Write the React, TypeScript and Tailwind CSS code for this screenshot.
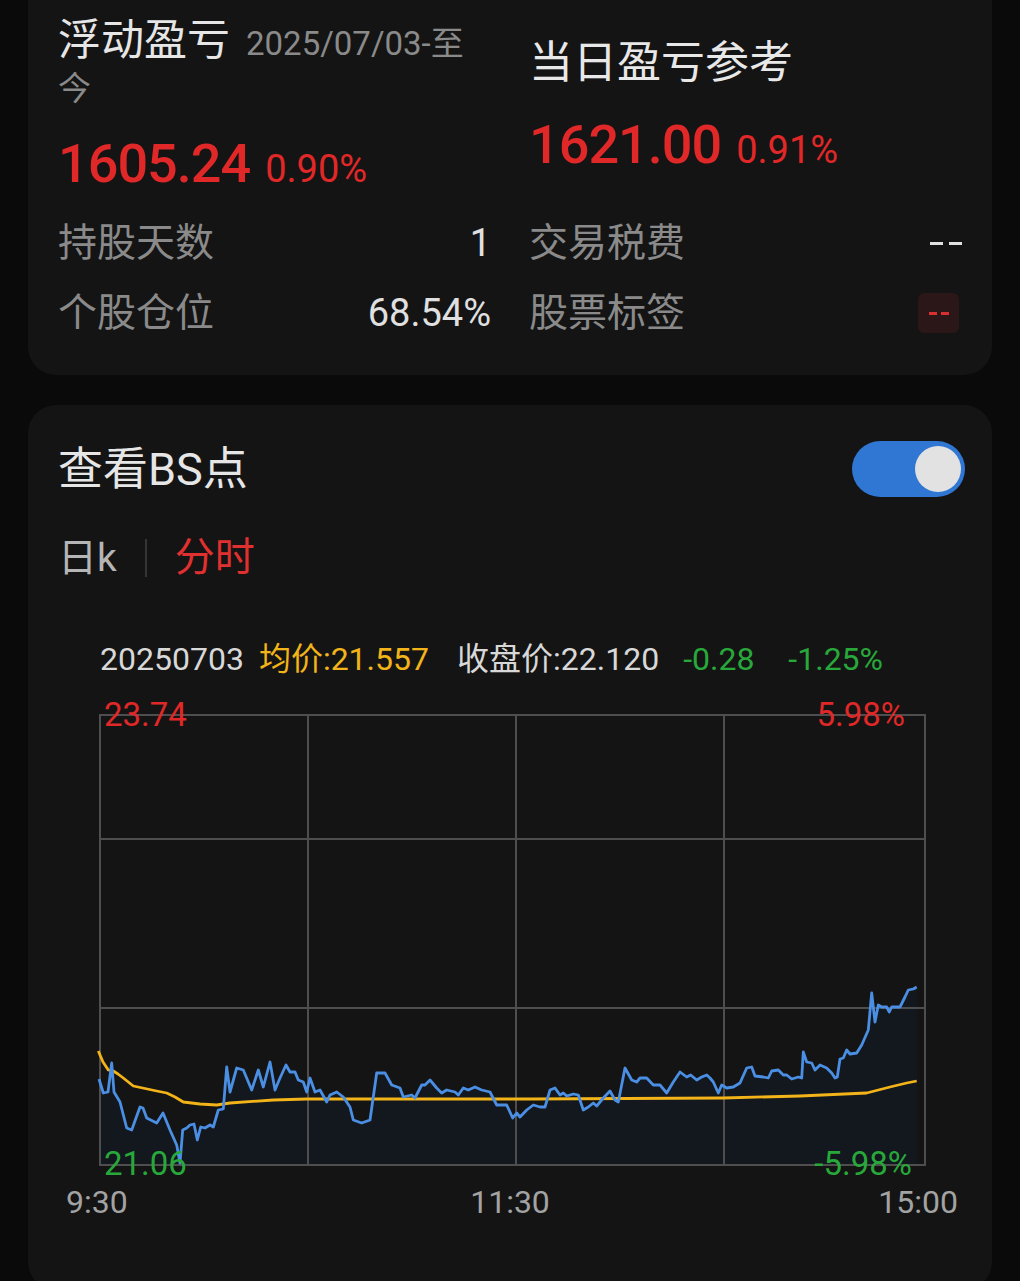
import React from "react";

const FONT = { fontFamily: '"Roboto", "Noto Sans CJK SC", sans-serif' };

const blue: [number, number][] = [
  [99, 1079], [103.3, 1093], [108, 1092], [111.7, 1063], [114, 1092], [120, 1102], [126.7, 1128], [131.7, 1130],
  [140, 1107], [143, 1108], [146.7, 1118], [156.7, 1123], [163, 1113], [170, 1130], [176.7, 1145], [180, 1163],
  [182.7, 1130], [186.7, 1128], [190, 1125], [194, 1124], [197.3, 1140], [200.7, 1127], [205, 1128], [210, 1125],
  [213.3, 1127], [218.3, 1110], [223.3, 1109], [226.7, 1067], [230, 1092], [236.7, 1068], [243.3, 1070],
  [251.7, 1090], [258.3, 1070], [263.3, 1087], [270, 1062], [275, 1090], [280, 1078], [286, 1065], [290, 1072],
  [295, 1072], [298.3, 1080], [303.3, 1082], [306.7, 1092], [310, 1078], [315, 1092], [320, 1090], [326.7, 1102],
  [330, 1095], [336.7, 1092], [343.3, 1097], [350, 1107], [353.3, 1120], [361.7, 1123], [370, 1120], [376.7, 1073],
  [385, 1073], [391.7, 1085], [400, 1088], [403.3, 1097], [411.7, 1095], [415, 1098], [421.7, 1085], [425, 1085],
  [430, 1080], [436.7, 1088], [441.7, 1093], [446.7, 1090], [455, 1092], [458.3, 1095], [463.3, 1088],
  [468.3, 1090], [475, 1087], [481.7, 1090], [490, 1092], [496.7, 1105], [506.7, 1105], [512.7, 1118],
  [516.7, 1113], [520, 1117], [526.7, 1110], [533.3, 1105], [540, 1107], [545, 1107], [550, 1090], [555, 1088],
  [560, 1095], [563.3, 1093], [566.7, 1096], [573.3, 1094], [578.3, 1095], [583.3, 1110], [588.3, 1107],
  [593.3, 1103], [596.7, 1106], [603.3, 1098], [610, 1091], [615, 1100], [618.3, 1102], [625, 1068],
  [631.7, 1080], [636.7, 1082], [640, 1078], [646.7, 1078], [653.3, 1085], [660, 1085], [666.7, 1093],
  [673.3, 1082], [680, 1072], [686.7, 1077], [690.7, 1075], [696.7, 1080], [701.7, 1077], [706.7, 1075],
  [710, 1078], [713.3, 1082], [718.3, 1093], [721.7, 1085], [726.7, 1088], [733.3, 1087], [740, 1083],
  [746.7, 1068], [751.7, 1067], [755, 1076], [763.3, 1077], [768.3, 1078], [771.7, 1071], [778.3, 1070],
  [783.3, 1075], [786.7, 1075], [791.7, 1079], [798.3, 1077], [801.7, 1078], [803.3, 1052], [806.7, 1062],
  [811.7, 1063], [815, 1070], [820, 1065], [826.7, 1068], [831.7, 1073], [835, 1078], [837.3, 1077], [840, 1059],
  [843.3, 1058], [846.7, 1050], [850, 1054], [856.7, 1053], [861.7, 1045], [868.3, 1030], [871.7, 993],
  [875, 1022], [878.3, 1005], [881.7, 1007], [886.7, 1007], [889.3, 1012], [891.7, 1007], [900, 1007],
  [905, 997], [908.3, 990], [913.3, 989], [916.7, 987],
];

const yellow: [number, number][] = [
  [98.3, 1051], [103, 1062], [108.3, 1070], [113.3, 1071], [118, 1074], [123.3, 1078], [133.3, 1086],
  [156.7, 1091], [166.7, 1093], [175, 1097], [183.3, 1102], [200, 1104], [216.7, 1105], [230, 1103],
  [273.3, 1100], [306.7, 1099], [420, 1099], [530, 1099], [723, 1098], [800, 1096], [866.7, 1093],
  [890, 1087], [906.7, 1083], [916.7, 1081],
];

const toPath = (pts: [number, number][]) =>
  pts.map((p, i) => `${i === 0 ? "M" : "L"}${p[0]} ${p[1]}`).join(" ");

function Row({ label, children }: { label: string; children: React.ReactNode }) {
  return (
    <div className="flex h-[70px] items-center justify-between">
      <span className="text-[39px] leading-none text-[#8a8a8a]">{label}</span>
      {children}
    </div>
  );
}

function Chart() {
  const area = `${toPath(blue)} L916.7 1165 L99 1165 Z`;
  return (
    <svg width="964" height="560" viewBox="28 690 964 560" className="block">
      <path d={area} fill="#13171e" />
      <g stroke="#4e4e4e" strokeWidth="2" fill="none">
        <rect x="100" y="715" width="825" height="450" />
        <line x1="308" y1="715" x2="308" y2="1165" />
        <line x1="516" y1="715" x2="516" y2="1165" />
        <line x1="724" y1="715" x2="724" y2="1165" />
        <line x1="100" y1="839" x2="925" y2="839" />
        <line x1="100" y1="1008" x2="925" y2="1008" />
      </g>
      <path d={toPath(yellow)} fill="none" stroke="#f2b418" strokeWidth="2.8" strokeLinejoin="round" />
      <path d={toPath(blue)} fill="none" stroke="#4a8fe3" strokeWidth="2.8" strokeLinejoin="round" />
      <g style={FONT} fontSize="33">
        <text x="104" y="726" fill="#e02828">23.74</text>
        <text x="905" y="726" fill="#e02828" textAnchor="end">5.98%</text>
        <text x="104" y="1175" fill="#28a83a">21.06</text>
        <text x="912" y="1175" fill="#28a83a" textAnchor="end">-5.98%</text>
      </g>
      <g style={FONT} fontSize="32" fill="#a3a3a3">
        <text x="66" y="1213">9:30</text>
        <text x="510" y="1213" textAnchor="middle">11:30</text>
        <text x="958" y="1213" textAnchor="end">15:00</text>
      </g>
    </svg>
  );
}

function Value({ main, pct }: { main: string; pct: string }) {
  return (
    <div className="flex h-[60px] items-baseline leading-[60px] text-[#e02828]">
      <span className="text-[54px] font-medium tracking-[-1px]">{main}</span>
      <span className="ml-[15px] text-[38px]">{pct}</span>
    </div>
  );
}

export default function App() {
  return (
    <div className="min-h-[1300px] bg-[#0a0a0a] pb-4" style={FONT}>
      {/* Card 1 */}
      <div className="mx-[28px] rounded-b-[28px] bg-[#141414] px-[30px] pb-[27px]">
        <div className="grid grid-cols-2 gap-x-[38px]">
          {/* top-left */}
          <div className="h-[208px] pt-[15px]">
            <div className="flex h-[50px] items-baseline leading-[50px]">
              <span className="text-[43px] text-[#e6e6e6]">浮动盈亏</span>
              <span className="ml-[16px] text-[33px] text-[#8a8a8a]">2025/07/03-至</span>
            </div>
            <div className="h-[48px] text-[33px] leading-[48px] text-[#8a8a8a]">今</div>
            <div className="mt-[21px]">
              <Value main="1605.24" pct="0.90%" />
            </div>
          </div>
          {/* top-right */}
          <div className="h-[208px] pt-[38px]">
            <div className="h-[50px] text-[44px] leading-[50px] text-[#e8e8e8]">当日盈亏参考</div>
            <div className="mt-[27px]">
              <Value main="1621.00" pct="0.91%" />
            </div>
          </div>

          <Row label="持股天数">
            <span className="text-[38px] leading-none text-[#e0e0e0]">1</span>
          </Row>
          <Row label="交易税费">
            <span className="flex gap-[6px]">
              <span className="h-[3px] w-[13px] bg-[#e0e0e0]" />
              <span className="h-[3px] w-[13px] bg-[#e0e0e0]" />
            </span>
          </Row>

          <Row label="个股仓位">
            <span className="text-[38px] leading-none text-[#e0e0e0]">68.54%</span>
          </Row>
          <Row label="股票标签">
            <span className="mr-[3px] flex h-[40px] w-[41px] items-center justify-center gap-[4px] rounded-[6px] bg-[#2b1717]">
              <span className="h-[3px] w-[8px] bg-[#d83030]" />
              <span className="h-[3px] w-[8px] bg-[#d83030]" />
            </span>
          </Row>
        </div>
      </div>

      {/* Card 2 */}
      <div className="mx-[28px] mt-[30px] rounded-[28px] bg-[#141414] pb-[40px]">
        <div className="pl-[30px] pr-[27px] pt-[36px]">
          <div className="flex h-[56px] items-center justify-between">
            <span className="text-[45px] leading-none text-[#e6e6e6]">查看BS点</span>
            <div className="flex h-[56px] w-[113px] items-center justify-end rounded-full bg-[#2f77d2] pr-[4px]">
              <div className="h-[46px] w-[46px] rounded-full bg-[#e2e2e2]" />
            </div>
          </div>
          <div className="mt-[42px] flex h-[38px] items-center">
            <span className="text-[39px] leading-none text-[#b5b5b5]">日k</span>
            <span className="mx-[28px] h-[38px] w-[2px] bg-[#353535]" />
            <span className="text-[40px] leading-none text-[#e03030]">分时</span>
          </div>
          <div className="mt-[62px] flex h-[40px] items-center pl-[42px] text-[32px] leading-none">
            <span className="text-[#d8d8d8]">20250703</span>
            <span className="ml-[15px] text-[#f2b418]">均价:21.557</span>
            <span className="ml-[28px] text-[#d8d8d8]">收盘价:22.120</span>
            <span className="ml-[24px] text-[#28a83a]">-0.28</span>
            <span className="ml-[34px] text-[#28a83a]">-1.25%</span>
          </div>
        </div>
        <div className="mt-[11px]">
          <Chart />
        </div>
      </div>
    </div>
  );
}
